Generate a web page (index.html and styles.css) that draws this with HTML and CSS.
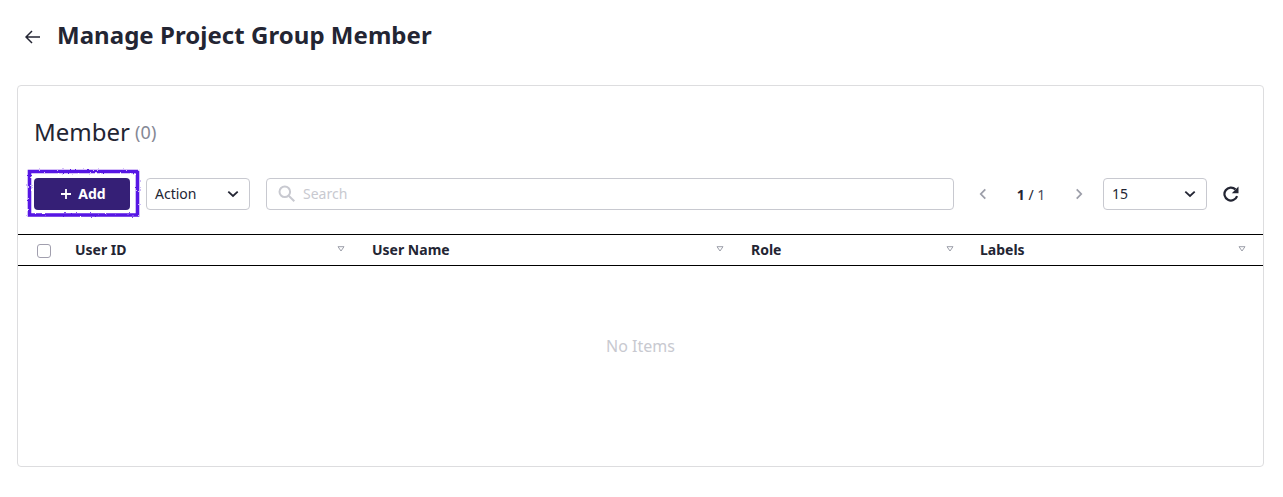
FILE: index.html
```html
<!DOCTYPE html>
<html lang="en">
<head>
<meta charset="utf-8">
<title>Manage Project Group Member</title>
<link rel="stylesheet" href="styles.css">
</head>
<body>
<header class="page-header">
  <svg class="back" width="16" height="16" viewBox="0 0 16 16"><path d="M15 8H1M7 2L1 8L7 14"/></svg>
  <h1>Manage Project Group Member</h1>
</header>
<main class="card">
  <h2 class="card-title">Member <span class="count">(0)</span></h2>
  <div class="toolbar">
    <div class="add-wrap">
      <button class="add"><svg width="12" height="12" viewBox="0 0 12 12"><path d="M6 1V11M1 6H11"/></svg><span>Add</span></button>
      <svg class="highlight" width="116" height="52" viewBox="0 0 116 52">
        <defs><filter id="rough" x="-5%" y="-10%" width="110%" height="120%"><feTurbulence type="fractalNoise" baseFrequency="0.4" numOctaves="2" seed="4" result="n"/><feDisplacementMap in="SourceGraphic" in2="n" scale="2.4" xChannelSelector="R" yChannelSelector="G"/><feGaussianBlur stdDeviation=".4"/></filter></defs>
        <path d="M4.500 4.500H112.500V48H4.500Z" filter="url(#rough)"/>
      </svg>
    </div>
    <div class="select action"><span>Action</span><svg class="chevron" width="12" height="8" viewBox="0 0 12 8"><path d="M1.300 1.600L6 6L10.700 1.600"/></svg></div>
    <div class="search"><svg width="18" height="18" viewBox="0 0 18 18"><circle cx="6.800" cy="6.800" r="5.300"/><path d="M10.700 10.700L16.300 16.300"/></svg><span>Search</span></div>
    <div class="pager">
      <svg class="arrow" width="8" height="12" viewBox="0 0 8 12"><path d="M6.300 1.300L1.800 6L6.300 10.700"/></svg>
      <span class="pages"><b>1</b> / <span class="total">1</span></span>
      <svg class="arrow" width="8" height="12" viewBox="0 0 8 12"><path d="M1.700 1.300L6.200 6L1.700 10.700"/></svg>
    </div>
    <div class="select size"><span>15</span><svg class="chevron" width="12" height="8" viewBox="0 0 12 8"><path d="M1.300 1.600L6 6L10.700 1.600"/></svg></div>
    <svg class="refresh" width="16" height="16" viewBox="0 0 16 16"><path class="arc" d="M14.100 10.200A6.500 6.500 0 1 1 12.500 3.400"/><path class="head" d="M15.500 .5V7.200H8.800Z"/></svg>
  </div>
  <div class="table-head">
    <div class="check-cell"><span class="checkbox"></span></div>
    <div class="th">User ID<svg width="8" height="6" viewBox="0 0 8 6"><path d="M1 .7H7L4 5Z"/></svg></div>
    <div class="th">User Name<svg width="8" height="6" viewBox="0 0 8 6"><path d="M1 .7H7L4 5Z"/></svg></div>
    <div class="th">Role<svg width="8" height="6" viewBox="0 0 8 6"><path d="M1 .7H7L4 5Z"/></svg></div>
    <div class="th">Labels<svg width="8" height="6" viewBox="0 0 8 6"><path d="M1 .7H7L4 5Z"/></svg></div>
  </div>
  <div class="empty">No Items</div>
</main>
</body>
</html>
```
FILE: styles.css
```css
* { box-sizing: border-box; }
body { margin: 0; background: #fff; color: #232533; font: 14px/20px "Noto Sans", sans-serif; }
svg { display: block; flex: none; fill: none; }
.page-header { display: flex; align-items: center; height: 72px; padding-left: 25px; gap: 16px; }
.page-header h1 { margin: 0 0 2px; font-size: 24px; line-height: 32px; font-weight: 700; letter-spacing: .04px; }
.back { stroke: #232533; stroke-width: 1.5; margin-top: 2px; }
.card { width: 1247px; height: 382px; margin: 13px 0 0 17px; border: 1px solid #dddddf; border-radius: 4px; }
.card-title { margin: 30px 0 0 16px; font-size: 24px; line-height: 32px; font-weight: 400; display: flex; gap: 5px; }
.count { font-size: 18px; color: #858895; letter-spacing: .2px; }
.toolbar { display: flex; align-items: center; height: 32px; margin: 30px 24px 0 16px; }
.add-wrap { position: relative; margin-right: 16px; }
.add { display: flex; align-items: center; justify-content: center; gap: 6px; width: 96px; height: 32px; padding: 0 0 0 2px; border: 0; border-radius: 4px; background: #351f76; color: #fff; font: 700 14px/20px "Noto Sans", sans-serif; }
.add svg { stroke: #fff; stroke-width: 1.8; }
.highlight { position: absolute; left: -9px; top: -11px; stroke: #5714e4; stroke-width: 3.6; pointer-events: none; }
.select { display: flex; align-items: center; justify-content: space-between; width: 104px; height: 32px; padding: 0 10px 0 8px; border: 1px solid #c8c9d0; border-radius: 4px; }
.chevron { stroke: #232533; stroke-width: 1.8; }
.search { display: flex; align-items: center; gap: 7px; width: 688px; height: 32px; margin-left: 16px; padding-left: 11px; border: 1px solid #c8c9d0; border-radius: 4px; color: #c8c9d0; }
.search svg { stroke: #c8c9d0; stroke-width: 2; }
.pager { display: flex; align-items: center; justify-content: space-between; width: 104px; margin: 0 20px 0 25px; }
.arrow { stroke: #9c9ea9; stroke-width: 1.8; }
.pages { white-space: pre; padding-top: 1px; }
.total { color: #494b58; }
.refresh { margin-left: 16px; }
.refresh .arc { stroke: #232533; stroke-width: 2.2; }
.refresh .head { fill: #232533; }
.table-head { display: grid; grid-template-columns: 49px 297px 379px 229px 291px; height: 32px; margin-top: 24px; border-top: 1px solid #000; border-bottom: 1px solid #000; }
.check-cell { padding: 9px 0 0 19px; }
.checkbox { display: block; width: 14px; height: 14px; border: 1px solid #a19fae; border-radius: 3px; }
.th { display: flex; align-items: center; justify-content: space-between; padding: 0 19px 0 8px; font-weight: 700; }
.th svg { stroke: #9c9ea9; stroke-width: 1; margin-top: -3px; }
.th:nth-child(4) svg { margin-right: -1px; }
.th:last-child svg { margin-right: -2px; }
.empty { margin-top: 68px; text-align: center; font-size: 16px; line-height: 24px; color: #c8c9d0; }
```
